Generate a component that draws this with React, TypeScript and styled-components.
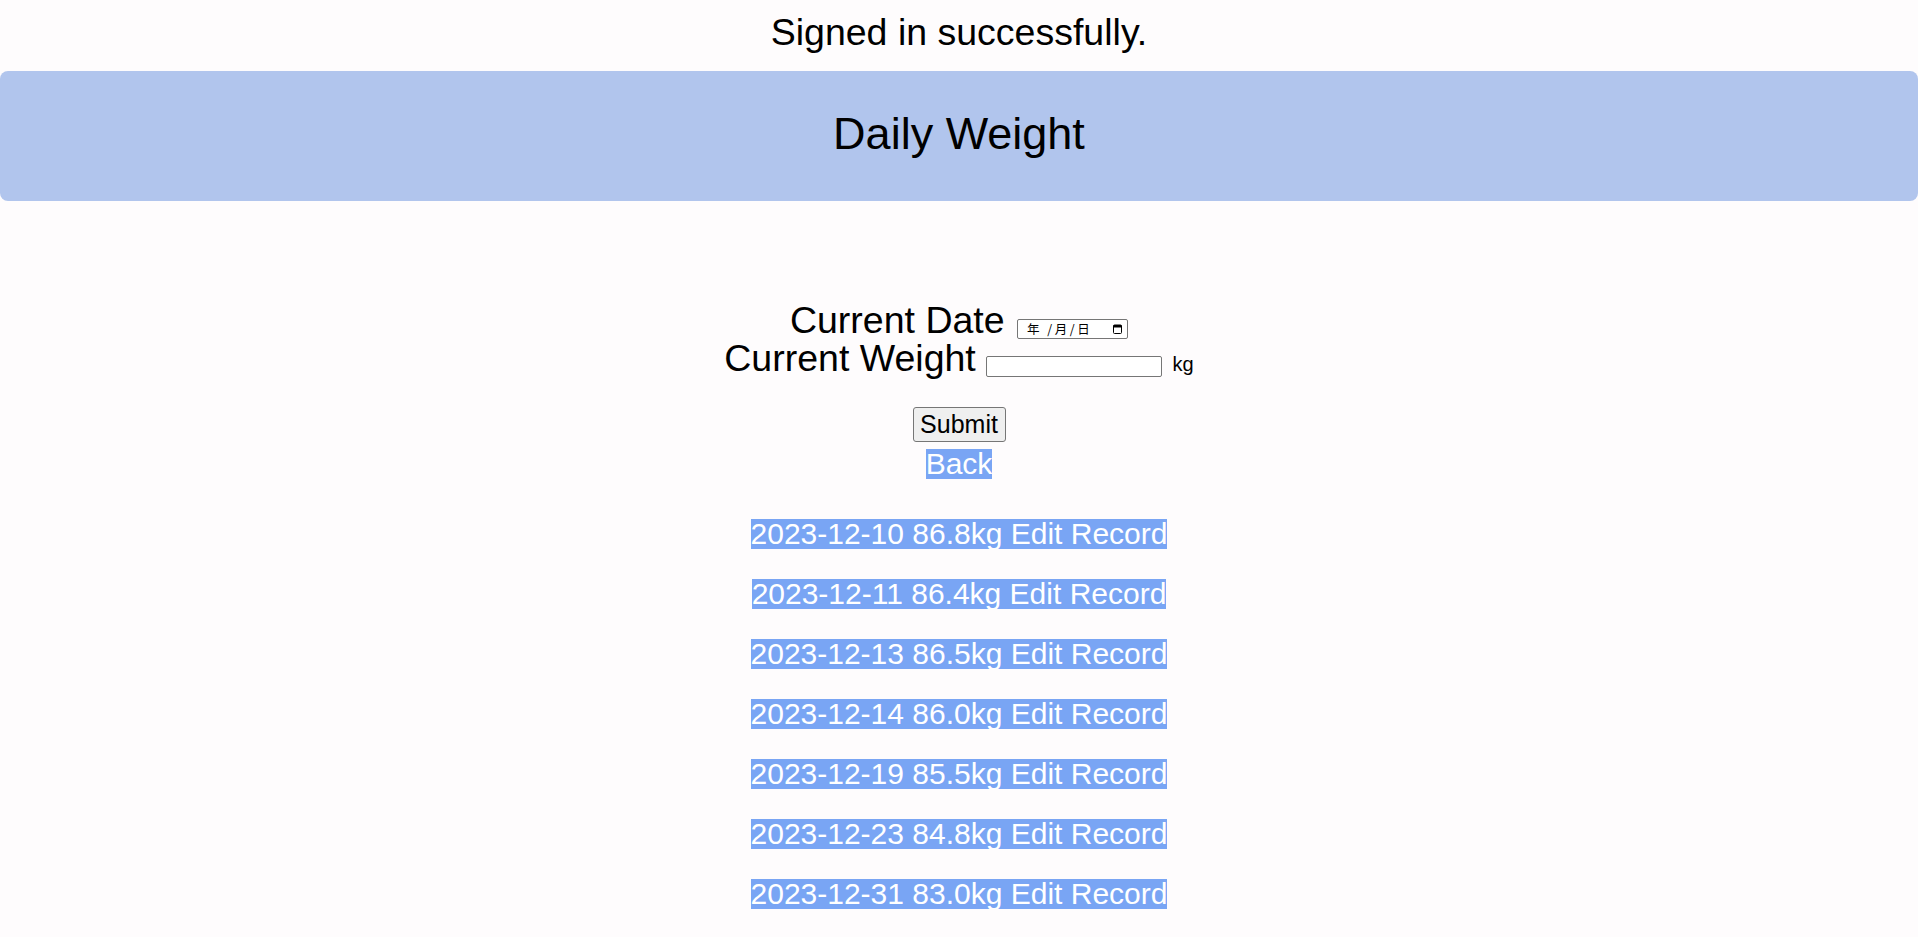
import React from "react";
import styled, { createGlobalStyle } from "styled-components";

const GlobalStyle = createGlobalStyle`
  html, body {
    margin: 0;
    padding: 0;
    background: #fefcfd;
    font-family: "Liberation Sans", Arial, sans-serif;
    line-height: 1;
    color: #000;
  }
`;

const Page = styled.div`
  display: flex;
  flex-direction: column;
  width: 100%;
`;

const Flash = styled.p`
  margin: 0;
  padding-top: 13.5px;
  margin-bottom: 20px;
  text-align: center;
  font-size: 37.5px;
  line-height: 1;
`;

const Header = styled.header`
  background: #b1c5ed;
  border-radius: 8px;
  padding: 40px 0 45px;
  text-align: center;
`;

const Title = styled.h1`
  margin: 0;
  font-size: 45px;
  font-weight: normal;
  line-height: 1;
`;

const Form = styled.form`
  margin-top: 101px;
  display: flex;
  flex-direction: column;
  align-items: center;
`;

const FieldRow = styled.div`
  font-size: 37.5px;
  line-height: 1;
  text-align: center;
  height: 38px;
`;

const DateBox = styled.span`
  display: inline-block;
  box-sizing: border-box;
  width: 111px;
  height: 20px;
  margin-left: 2px;
  padding: 0 5px 0 9px;
  border: 1px solid #767676;
  border-radius: 2px;
  background: #fff;
  overflow: hidden;
  vertical-align: -6px;
  text-align: left;
  font-family: "Noto Sans CJK SC", "Liberation Sans", sans-serif;
  font-size: 12.5px;
  line-height: 18px;
  color: #000;
`;

const DateText = styled.span`
  letter-spacing: 2.5px;
  white-space: pre;
`;

const IconSlot = styled.span`
  float: right;
  height: 18px;
  display: flex;
  align-items: center;
`;

const WeightInput = styled.input`
  box-sizing: border-box;
  width: 176px;
  height: 21px;
  padding: 1px 2px;
  border: 1px solid #767676;
  border-radius: 2px;
  background: #fff;
  font-family: "Liberation Sans", Arial, sans-serif;
  font-size: 13.333px;
  vertical-align: baseline;
`;

const Unit = styled.span`
  font-size: 20px;
`;

const SubmitButton = styled.button`
  margin-top: 29px;
  box-sizing: border-box;
  width: 93px;
  height: 35px;
  padding: 0;
  border: 1px solid #767676;
  border-radius: 3px;
  background: #efefef;
  font-family: "Liberation Sans", Arial, sans-serif;
  font-size: 25px;
  line-height: 1;
  color: #000;
`;

const Highlight = styled.a`
  display: block;
  font-size: 30px;
  line-height: 1;
  color: #fff;
  background: #79a5f4;
  text-decoration: none;
  white-space: pre;
`;

const BackLink = styled(Highlight)`
  margin-top: 7px;
`;

const RecordList = styled.div`
  margin-top: 40px;
  display: flex;
  flex-direction: column;
  align-items: center;
  gap: 30px;
`;

const CalendarIcon = () => (
  <svg width="9" height="10" viewBox="0 0 9 10" aria-hidden="true">
    <rect x="0.5" y="1" width="8" height="8.5" rx="1" fill="none" stroke="#000" strokeWidth="1" />
    <rect x="0.5" y="1" width="8" height="2.5" fill="#000" />
  </svg>
);

const records = [
  ["2023-12-10", "86.8"],
  ["2023-12-11", "86.4"],
  ["2023-12-13", "86.5"],
  ["2023-12-14", "86.0"],
  ["2023-12-19", "85.5"],
  ["2023-12-23", "84.8"],
  ["2023-12-31", "83.0"],
];

export default function App() {
  return (
    <>
      <GlobalStyle />
      <Page>
        <Flash>Signed in successfully.</Flash>
        <Header>
          <Title>Daily Weight</Title>
        </Header>
        <Form onSubmit={(e) => e.preventDefault()}>
          <FieldRow>
            Current Date{" "}
            <DateBox>
              <IconSlot>
                <CalendarIcon />
              </IconSlot>
              <DateText>年 /月/日</DateText>
            </DateBox>
          </FieldRow>
          <FieldRow>
            Current Weight <WeightInput type="text" /> <Unit>kg</Unit>
          </FieldRow>
          <SubmitButton type="submit">Submit</SubmitButton>
          <BackLink href="#">Back</BackLink>
          <RecordList>
            {records.map(([d, w]) => (
              <Highlight key={d} href="#">
                {`${d} ${w}kg Edit Record`}
              </Highlight>
            ))}
          </RecordList>
        </Form>
      </Page>
    </>
  );
}
